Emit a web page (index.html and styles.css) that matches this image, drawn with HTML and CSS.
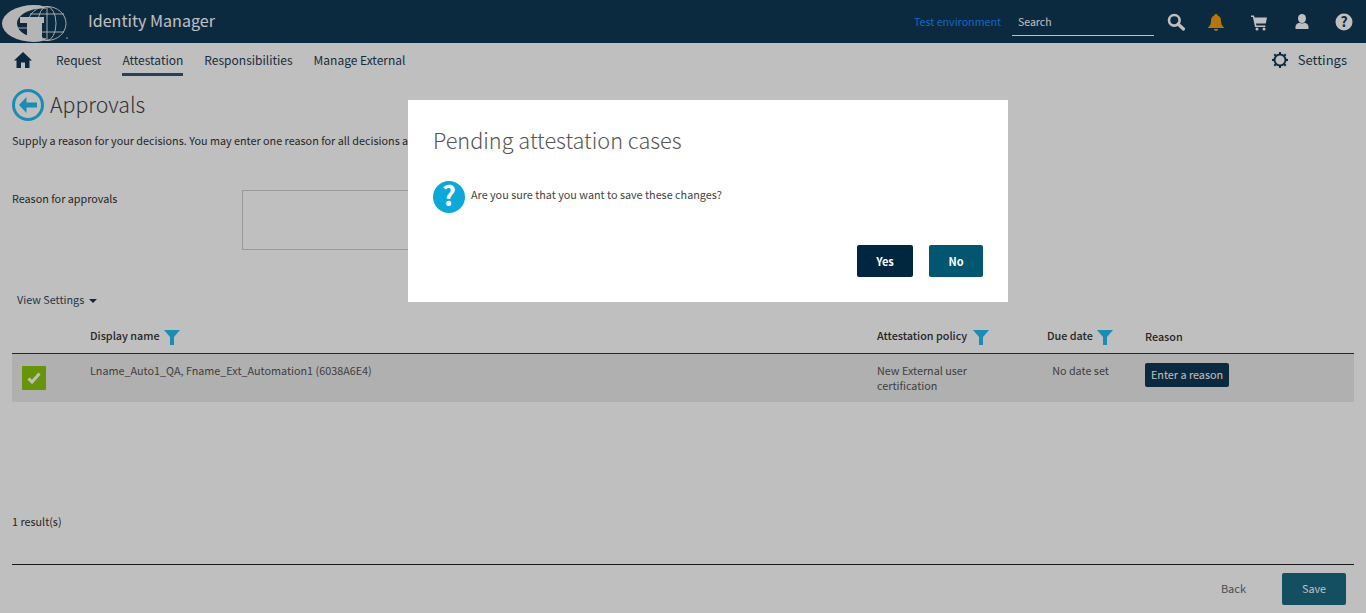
FILE: index.html
```html
<!DOCTYPE html>
<html lang="en">
<head>
	<meta charset="UTF-8">
	<title>Identity Manager</title>
	<link rel="stylesheet" href="styles.css">
</head>
<body>
	<!-- top bar -->
	<header class="topbar">
		<svg class="logo" viewBox="0 0 66 38" width="66" height="38">
			<ellipse cx="32" cy="18.500" rx="32" ry="18.500" fill="#f2f2f2"/>
			<ellipse cx="40" cy="18.500" rx="25" ry="15" fill="#113855"/>
			<path d="M38 0H50C58 3 64 10 64 18.500S58 34 50 37H38C44 35 50 30 50 18.500S44 2 38 0Z" fill="#113855"/>
			<g fill="none" stroke="#f2f2f2" stroke-width="0.900">
				<ellipse cx="45" cy="18.500" rx="19" ry="17"/>
				<ellipse cx="45" cy="18.500" rx="9" ry="17"/>
				<path d="M45 1.500V35.500M28 9H62M40 27H62M15 23H25"/>
			</g>
			<rect x="18" y="12" width="24" height="6" fill="#f2f2f2"/>
			<path d="M25 17H40V35H25Z" fill="#f2f2f2"/>
			<circle cx="65" cy="33" r="0.800" fill="#f2f2f2"/>
		</svg>
		<span class="app-name">Identity Manager</span>
		<span class="env-label">Test environment</span>
		<div class="search-box">Search</div>
		<div class="top-icons">
			<svg viewBox="0 0 18 18" width="18" height="18"><circle cx="7.300" cy="7.300" r="5.300" fill="none" stroke="#fff" stroke-width="2.600"/><path d="M11 11l5.500 5" stroke="#fff" stroke-width="3.200" stroke-linecap="round"/></svg>
			<svg viewBox="2 0 18 18" width="18" height="18"><path d="M9 1c1 0 1.500.6 1.600 1.400C13 3 14 5 14 8c0 3 1 5 3 6.500v.5H1v-.5C3 13 4 11 4 8c0-3 1-5 3.400-5.600C7.500 1.600 8 1 9 1zM7 16h4c0 1-1 2-2 2s-2-1-2-2z" fill="#f59e11"/></svg>
			<svg viewBox="1 0 18 18" width="18" height="18"><path d="M1 2.500h3l.6 2H17l-1.200 6H6l.4 2h9v1.500H5L2.900 4H1z" fill="#fff"/><circle cx="7" cy="16" r="1.500" fill="#fff"/><circle cx="14" cy="16" r="1.500" fill="#fff"/></svg>
			<svg viewBox="0 0 18 18" width="18" height="18"><ellipse cx="9" cy="5.500" rx="4" ry="4.500" fill="#fff"/><path d="M2.500 16v-2.500C2.500 11.500 4.500 10.500 6.500 9.800c1.500 1 3.500 1 5 0 2 .7 4 1.700 4 3.700V16z" fill="#fff"/></svg>
			<svg viewBox="0 0 18 18" width="18" height="18"><circle cx="9" cy="9" r="8.500" fill="#fff"/><text x="9" y="13.500" text-anchor="middle" class="help-mark">?</text></svg>
		</div>
	</header>

	<!-- main menu -->
	<nav class="mainnav">
		<svg class="home-icon" viewBox="0 0 18 16" width="18" height="16"><path d="M9 0L18 8.500H15.500V16H11V10.500H7V16H2.500V8.500H0Z" fill="#113855"/></svg>
		<a class="nav-item">Request</a>
		<a class="nav-item active">Attestation</a>
		<a class="nav-item">Responsibilities</a>
		<a class="nav-item">Manage External</a>
		<a class="settings-link">
			<svg viewBox="0 0 16 16" width="16" height="16"><circle cx="8" cy="8" r="5.500" fill="none" stroke="#113855" stroke-width="2"/><path d="M8 0v3M8 13v3M0 8h3M13 8h3M2.300 2.300l2 2M11.700 11.700l2 2M13.700 2.300l-2 2M4.300 11.700l-2 2" stroke="#113855" stroke-width="2"/></svg>
			Settings
		</a>
	</nav>

	<main class="page">
		<div class="page-title">
			<svg viewBox="0 0 32 32" width="32" height="32"><circle cx="16" cy="16" r="14.500" fill="#fff" stroke="#22bdf0" stroke-width="3"/><path d="M14.500 8L7 16l7.500 8v-5.500H25v-5H14.500Z" fill="#22bdf0"/></svg>
			<h1>Approvals</h1>
		</div>
		<p class="intro">Supply a reason for your decisions. You may enter one reason for all decisions a</p>

		<div class="reason-row">
			<label class="reason-label">Reason for approvals</label>
			<div class="reason-input"></div>
		</div>

		<div class="view-settings">View Settings <span class="caret"></span></div>

		<table class="cases">
			<thead>
				<tr>
					<th class="col-check"></th>
					<th class="col-name">Display name <svg class="filter" viewBox="0 0 16 16" width="16" height="16"><path d="M0 1H16L10 8V16H6V8Z"/></svg></th>
					<th class="col-policy">Attestation policy <svg class="filter filter-wide" viewBox="0 0 16 16" width="16" height="16"><path d="M0 1H16L10 8V16H6V8Z"/></svg></th>
					<th class="col-date">Due date <svg class="filter" viewBox="0 0 16 16" width="16" height="16"><path d="M0 1H16L10 8V16H6V8Z"/></svg></th>
					<th class="col-reason">Reason</th>
				</tr>
			</thead>
			<tbody>
				<tr>
					<td class="cell-check"><span class="checkbox"><svg viewBox="0 0 24 24" width="24" height="24"><path d="M6.500 12.500l3.500 3.500 7.500-8.500" fill="none" stroke="#fff" stroke-width="3"/></svg></span></td>
					<td>Lname_Auto1_QA, Fname_Ext_Automation1 (6038A6E4)</td>
					<td>New External user certification</td>
					<td class="cell-date">No date set</td>
					<td class="cell-reason"><button class="btn-small">Enter a reason</button></td>
				</tr>
			</tbody>
		</table>

		<div class="result-count">1 result(s)</div>

		<footer class="page-footer">
			<span class="back-link">Back</span>
			<button class="btn-save">Save</button>
		</footer>
	</main>

	<!-- confirm dialog -->
	<div class="overlay">
		<div class="dialog">
			<h2>Pending attestation cases</h2>
			<div class="dialog-msg">
				<svg viewBox="0 0 32 32" width="32" height="32"><circle cx="16" cy="16" r="16" fill="#0ba8d8"/><text x="16" y="25" text-anchor="middle" class="ask-mark">?</text></svg>
				<span>Are you sure that you want to save these changes?</span>
			</div>
			<div class="dialog-actions">
				<button class="btn-yes">Yes</button>
				<button class="btn-no">No</button>
			</div>
		</div>
	</div>
</body>
</html>
```

FILE: styles.css
```css
* { box-sizing: border-box; }
html, body { height: 100%; }
body { margin: 0; display: flex; flex-direction: column; height: 613px; overflow: hidden; background-color: #fff; color: #333; font-family: "Noto Sans CJK SC", "Open Sans", sans-serif; font-size: 10.800px; }
button { font-family: inherit; border: none; border-radius: 2px; color: #fff; }
svg { overflow: visible; }

.topbar { height: 43px; flex-shrink: 0; display: flex; align-items: center; background-color: #113855; color: #fff; padding-left: 2px; overflow: hidden; }
.logo { flex-shrink: 0; margin-top: 5px; }
.app-name { margin: -3px 0 0 20px; font-size: 16.100px; }
.env-label { margin-left: auto; color: #1a8cff; font-size: 10.700px; }
.search-box { width: 142px; height: 26px; margin: 3px 0 0 11px; padding: 4px 6px; border-bottom: 1px solid #fff; font-size: 10.500px; line-height: 16px; }
.top-icons { display: flex; gap: 24px; margin: 0 13px 0 13px; }
.top-icons svg { display: block; }
.help-mark { font-size: 14px; font-weight: bold; fill: #113855; }

.mainnav { height: 34px; flex-shrink: 0; display: flex; align-items: flex-start; padding: 9px 19px 0 14px; }
.home-icon { margin-right: 24px; }
.nav-item { height: 25px; margin: -1px 21px 0 0; font-size: 12px; line-height: 18px; color: #1f3a52; }
.nav-item.active { border-bottom: 3px solid #34567a; }
.settings-link { margin: -1px 0 0 auto; display: flex; align-items: center; gap: 10px; font-size: 13px; line-height: 18px; color: #1f3a52; }

.page { flex: 1; display: flex; flex-direction: column; padding: 12px 12px 8px; }
.page-title { display: flex; align-items: center; gap: 6px; height: 32px; }
h1 { margin: -4px 0 0; font-size: 21.300px; font-weight: 300; color: #444; }
.intro { margin: 10px 0 0; line-height: 18px; white-space: nowrap; }

.reason-row { display: flex; margin-top: 41px; }
.reason-label { width: 230px; margin-top: -1px; line-height: 18px; }
.reason-input { width: 500px; height: 60px; border: 1px solid #ccc; background-color: #fff; }

.view-settings { margin: 40px 0 0 5px; line-height: 18px; color: #34495e; }
.caret { display: inline-block; margin-left: 2px; vertical-align: middle; border-top: 4px solid #113855; border-left: 4px solid transparent; border-right: 4px solid transparent; }

.cases { width: 100%; margin-top: 8px; border-collapse: collapse; table-layout: fixed; }
.cases th { height: 37px; padding: 3px 0 0; text-align: left; font-weight: 500; border-bottom: 1px solid #333; white-space: nowrap; }
.filter { vertical-align: middle; margin-left: 2px; fill: #22bdf0; }
.filter-wide { margin-left: 3px; }
.col-check { width: 78px; }
.col-policy { width: 170px; }
.col-date { width: 98px; }
.col-reason { width: 209px; }
.cases tbody tr { height: 49px; background-color: #ebebeb; }
.cases td { padding: 9px 20px 0 0; vertical-align: top; line-height: 15px; color: #555; }
.cases td.cell-check { padding: 12px 0 0 10px; }
.checkbox { display: block; width: 24px; height: 24px; background-color: #8bc60d; }
.checkbox svg { display: block; }
.cases td.cell-date { padding-right: 31px; text-align: center; }
.cases td.cell-reason { padding-top: 9px; }
.btn-small { height: 24px; padding: 0 6px 2px; background-color: #113855; font-size: 10.800px; }

.result-count { margin-top: 111px; line-height: 16px; }
.page-footer { margin-top: 35px; padding-top: 8px; border-top: 1px solid #222; display: flex; align-items: center; justify-content: flex-end; }
.back-link { margin: -2px 36px 0 0; font-size: 11px; color: #5a6a7a; }
.btn-save { width: 64px; height: 32px; margin-right: 8px; padding-bottom: 4px; background-color: #1a6a80; font-size: 10.800px; }

.overlay { position: fixed; inset: 0; z-index: 10; background-color: rgba(0, 0, 0, 0.25); }
.dialog { width: 600px; height: 202px; margin: 100px 0 0 408px; padding: 25px; background-color: #fff; }
.dialog h2 { margin: -1px 0 0; font-size: 21.700px; font-weight: 300; line-height: 32px; color: #555; }
.dialog-msg { display: flex; align-items: center; gap: 6px; margin-top: 25px; color: #444; }
.dialog-msg svg { flex-shrink: 0; }
.dialog-msg span { margin-top: -6px; }
.ask-mark { font-size: 27px; font-weight: bold; fill: #fff; }
.dialog-actions { display: flex; justify-content: flex-end; gap: 16px; margin-top: 32px; }
.dialog-actions button { height: 32px; padding-bottom: 2px; font-size: 11px; font-weight: bold; }
.btn-yes { width: 56px; background-color: #002640; }
.btn-no { width: 54px; background-color: #03566f; }
```
